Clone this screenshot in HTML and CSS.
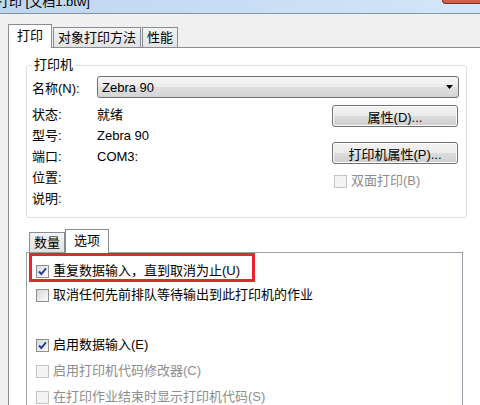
FILE: index.html
```html
<!DOCTYPE html>
<html lang="zh-CN">

<head>
    <meta charset="UTF-8">
    <title>打印</title>
    <link rel="stylesheet" href="styles.css">
</head>

<body>
    <div class="titlebar">
        <span class="title">打印 [文档1.btw]</span>
        <span class="close"></span>
    </div>

    <div class="tabs">
        <span class="tab active">打印</span>
        <span class="tab">对象打印方法</span>
        <span class="tab">性能</span>
    </div>

    <div class="panel">
        <!-- printer group -->
        <fieldset class="group">
            <legend>打印机</legend>
            <div class="name-row">
                <span class="key">名称(N):</span>
                <div class="select">
                    <span>Zebra 90</span>
                    <svg width="7" height="4" viewBox="0 0 7 4"><path d="M0 0H7L3.5 4Z" fill="#000"/></svg>
                </div>
            </div>
            <div class="info">
                <div class="fields">
                    <div class="field"><span class="key">状态:</span><span>就绪</span></div>
                    <div class="field"><span class="key">型号:</span><span>Zebra 90</span></div>
                    <div class="field"><span class="key">端口:</span><span>COM3:</span></div>
                    <div class="field"><span class="key">位置:</span><span></span></div>
                    <div class="field"><span class="key">说明:</span><span></span></div>
                </div>
                <div class="actions">
                    <button class="btn first">属性(D)...</button>
                    <button class="btn second">打印机属性(P)...</button>
                    <label class="check disabled duplex"><span class="box"></span>双面打印(B)</label>
                </div>
            </div>
        </fieldset>

        <div class="subtabs">
            <span class="tab">数量</span>
            <span class="tab active">选项</span>
        </div>

        <div class="subpanel">
            <div class="highlight">
                <label class="check"><span class="box"><svg width="11" height="11" viewBox="0 0 11 11"><path d="M2 5.5L4.3 8L9 2.3" fill="none" stroke="#1f3f92" stroke-width="1.9"/></svg></span>重复数据输入，直到取消为止(U)</label>
            </div>
            <label class="check opt"><span class="box"></span>取消任何先前排队等待输出到此打印机的作业</label>
            <label class="check opt spaced"><span class="box"><svg width="11" height="11" viewBox="0 0 11 11"><path d="M2 5.5L4.3 8L9 2.3" fill="none" stroke="#1f3f92" stroke-width="1.9"/></svg></span>启用数据输入(E)</label>
            <label class="check opt disabled"><span class="box"></span>启用打印机代码修改器(C)</label>
            <label class="check opt disabled"><span class="box"></span>在打印作业结束时显示打印机代码(S)</label>
        </div>
    </div>
</body>

</html>
```

FILE: styles.css
```css
body {
    margin: 0;
    width: 480px;
    height: 405px;
    overflow: hidden;
    background: #f0f0f0;
    font-family: "Liberation Sans", "Noto Sans CJK SC", sans-serif;
    font-size: 13px;
    color: #000;
}

.titlebar {
    height: 13px;
    border-bottom: 1px solid #8593a2;
    background: linear-gradient(to right, #bed6ef, #d3e6f9);
    display: flex;
    justify-content: space-between;
    align-items: flex-start;
    overflow: hidden;
}

.title {
    margin: -6px 0 0 -4px;
    line-height: 16px;
}

.close {
    width: 37px;
    height: 3px;
    background: #d0604c;
    border: 1px solid #7b2a20;
    border-top: none;
    border-right: none;
    border-radius: 0 0 0 4px;
}

/* tab strips */
.tabs,
.subtabs {
    display: flex;
    align-items: flex-end;
    height: 23px;
}

.tabs {
    margin-top: 10px;
    padding-left: 8px;
}

.subtabs {
    margin-top: 11px;
    padding-left: 2px;
}

.tab {
    height: 20px;
    box-sizing: border-box;
    padding: 0 4px;
    border: 1px solid #898c95;
    border-bottom: none;
    background: linear-gradient(#f4f4f4, #e2e2e2);
    line-height: 19px;
    margin-left: 1px;
}

.tab.active {
    height: 24px;
    margin: 0 0 -1px 0;
    padding: 0 8px;
    background: #fff;
    line-height: 22px;
    position: relative;
}

.panel {
    width: 473px;
    height: 358px;
    box-sizing: border-box;
    margin-left: 8px;
    padding-left: 17px;
    border: 1px solid #898c95;
    border-right: none;
    border-bottom: none;
    background: #fff;
    overflow: hidden;
}

/* printer group */
.group {
    width: 440px;
    box-sizing: border-box;
    margin: 9px 0 0;
    padding: 3px 7px 8px 5px;
    border: 1px solid #d5dfe5;
    border-radius: 3px;
}

.group legend {
    padding: 0 2px;
    line-height: 16px;
}

.key {
    width: 65px;
    flex: none;
}

.name-row {
    display: flex;
    align-items: center;
    height: 22px;
}

.select {
    width: 362px;
    height: 22px;
    box-sizing: border-box;
    padding: 0 5px 0 4px;
    border: 1px solid #707070;
    border-radius: 3px;
    background: linear-gradient(#f6f6f6, #ececec 48%, #dfdfdf 52%, #d5d5d5);
    display: flex;
    align-items: center;
    justify-content: space-between;
}

.info {
    display: grid;
    grid-template-columns: 1fr 126px 1px;
    margin-top: 6px;
}

.field {
    display: flex;
    line-height: 21px;
    height: 21px;
}

.actions {
    display: flex;
    flex-direction: column;
    align-items: flex-start;
}

.btn {
    width: 126px;
    height: 22px;
    padding: 0;
    font: inherit;
    color: #000;
    border: 1px solid #707070;
    border-radius: 3px;
    box-shadow: inset 0 0 0 1px #fcfcfc;
    background: linear-gradient(#f2f2f2, #ebebeb 50%, #dddddd 51%, #cfcfcf);
}

.btn.first {
    margin-top: 1px;
}

.btn.second {
    margin-top: 15px;
}

/* checkboxes */
.check {
    display: flex;
    align-items: center;
    line-height: 16px;
}

.check .box {
    width: 13px;
    height: 13px;
    box-sizing: border-box;
    margin-right: 4px;
    border: 1px solid #8e8f8f;
    background: linear-gradient(135deg, #d6d8dc, #fbfbfb);
    display: flex;
    align-items: center;
    justify-content: center;
    flex: none;
}

.check.disabled {
    color: #8d8d8d;
}

.check.disabled .box {
    border-color: #c4c4c4;
    background: #f4f4f4;
}

.duplex {
    margin: 9px 0 0 2px;
}

/* options panel */
.subpanel {
    width: 437px;
    height: 200px;
    box-sizing: border-box;
    border: 1px solid #9ba0a8;
    background: #fff;
}

.highlight {
    width: 226px;
    height: 29px;
    box-sizing: border-box;
    margin-left: 2px;
    padding: 7px 0 0 4px;
    border: 3px solid #e5262a;
}

.opt {
    height: 26px;
    padding-left: 9px;
}

.opt.spaced {
    margin-top: 24px;
}
```
